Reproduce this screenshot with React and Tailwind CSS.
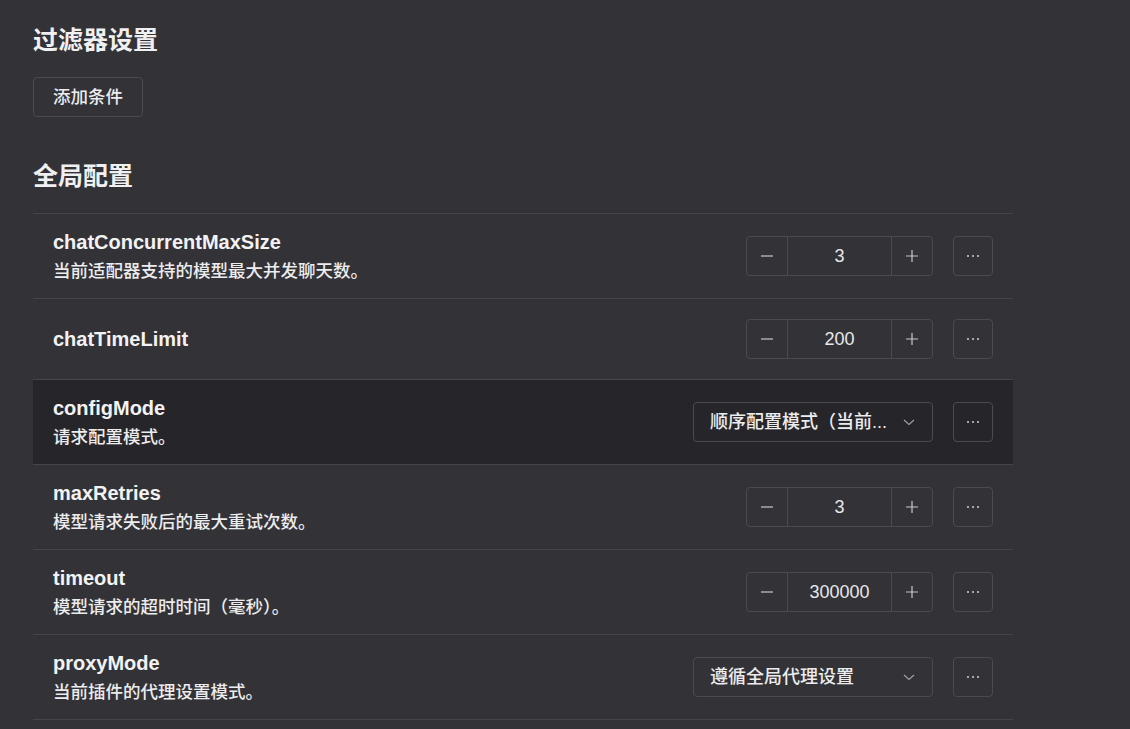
import React from 'react';

const font = { fontFamily: '"Liberation Sans", "Noto Sans CJK SC", sans-serif' };

const rows = [
  { name: 'chatConcurrentMaxSize', desc: '当前适配器支持的模型最大并发聊天数。', type: 'number', value: '3' },
  { name: 'chatTimeLimit', type: 'number', value: '200' },
  { name: 'configMode', desc: '请求配置模式。', type: 'select', value: '顺序配置模式（当前...', active: true },
  { name: 'maxRetries', desc: '模型请求失败后的最大重试次数。', type: 'number', value: '3' },
  { name: 'timeout', desc: '模型请求的超时时间（毫秒）。', type: 'number', value: '300000' },
  { name: 'proxyMode', desc: '当前插件的代理设置模式。', type: 'select', value: '遵循全局代理设置' },
];

const NumberInput = ({ value }) => (
  <div className="flex h-10 w-[187px] items-stretch rounded border border-[#4a4a50] text-[#e8e8ea]">
    <button className="flex w-[41px] items-center justify-center border-r border-[#4a4a50]">
      <svg width="16" height="16" viewBox="0 0 16 16"><path d="M2 8h12" stroke="#c8c8cc" strokeWidth="1.2" /></svg>
    </button>
    <div className="flex flex-1 items-center justify-center text-[18px]">{value}</div>
    <button className="flex w-[41px] items-center justify-center border-l border-[#4a4a50]">
      <svg width="16" height="16" viewBox="0 0 16 16"><path d="M2 8h12M8 2v12" stroke="#c8c8cc" strokeWidth="1.2" /></svg>
    </button>
  </div>
);

const Select = ({ value }) => (
  <div className="flex h-10 w-[240px] items-center justify-between rounded border border-[#4a4a50] pl-4 pr-4 text-[18px] font-medium text-[#ececee]">
    <span className="whitespace-nowrap overflow-hidden">{value}</span>
    <svg width="14" height="14" viewBox="0 0 14 14" className="ml-2 shrink-0"><path d="M2 5l5 4.5L12 5" fill="none" stroke="#a0a0a6" strokeWidth="1.1" /></svg>
  </div>
);

export default function App() {
  return (
    <div className="min-h-[729px] w-full bg-[#323237] px-[33px] pt-[24px] text-[#f0f0f2]" style={font}>
      <h2 className="text-[25px] font-bold leading-[32px]">过滤器设置</h2>
      <button className="mt-[21px] h-10 w-[110px] rounded border border-[#4a4a50] text-[17.5px] font-medium text-[#ececee]">添加条件</button>

      <h2 className="mt-[43px] text-[25px] font-bold leading-[32px]">全局配置</h2>
      <div className="mt-[21px] w-[980px] border-t border-[#45454b]">
        {rows.map((r) => (
          <div
            key={r.name}
            className={`flex items-center justify-between border-b border-[#45454b] px-5 ${r.desc ? 'h-[85px]' : 'h-[81px]'} ${r.active ? 'bg-[#26262a]' : ''}`}
          >
            <div className="flex flex-col">
              <div className="text-[20px] font-bold leading-[24px] text-[#f2f2f4]">{r.name}</div>
              {r.desc && <div className="mt-[7px] text-[17.5px] font-medium leading-[21px] text-[#ececee]">{r.desc}</div>}
            </div>
            <div className="flex items-center gap-[20px]">
              {r.type === 'number' ? <NumberInput value={r.value} /> : <Select value={r.value} />}
              <button className="flex h-10 w-10 items-center justify-center rounded border border-[#4a4a50]">
                <svg width="14" height="4" viewBox="0 0 14 4"><circle cx="2" cy="2" r="1" fill="#d0d0d4" /><circle cx="7" cy="2" r="1" fill="#d0d0d4" /><circle cx="12" cy="2" r="1" fill="#d0d0d4" /></svg>
              </button>
            </div>
          </div>
        ))}
      </div>
    </div>
  );
}
